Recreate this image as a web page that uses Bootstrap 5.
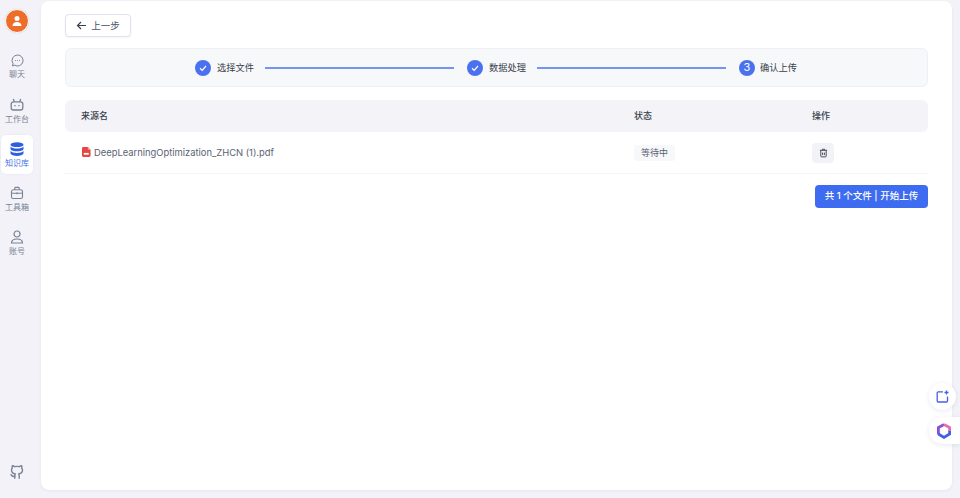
<!DOCTYPE html>
<html>
  <head>
    <meta charset="UTF-8" />
    <title>知识库</title>
    <link href="https://cdn.jsdelivr.net/npm/bootstrap@5.3.0/dist/css/bootstrap.min.css" rel="stylesheet" />
    <style>
      html, body { height: 100%; overflow: hidden; }
      body {
        background: #f2f2f8;
        color: #485264;
        font-family: Inter, "Noto Sans CJK SC", sans-serif;
        font-size: 9px;
      }
      .app-shell { height: 498px; }
      .side-bar { width: 41px; padding: 9px 8px 0 1px; }
      .avatar-ring {
        width: 24px; height: 24px; border-radius: 50%;
        background: #ed6d2b; border: 1px solid #fff;
        box-shadow: 0 0 2px rgba(0,0,0,.1);
        margin-bottom: 14px;
      }
      .side-item {
        width: 32px; height: 39px; margin-bottom: 5px; flex: none;
        font-size: 8px; line-height: 10px; color: #7a8294; border-radius: 5px;
      }
      .side-item svg { margin-bottom: 2px; }
      .side-item.on { background: #fff; color: #3f6fe8; box-shadow: 0 0 3px rgba(19,51,107,.06); }
      .git-link { margin-top: auto; margin-bottom: 19px; }
      .git-link svg { display: block; }
      .main-panel {
        width: 911px; height: 489px; margin-top: 1px; background: #fff;
        border-radius: 8px; padding: 13px 24px 0 24px;
        box-shadow: 0 1px 3px rgba(19,51,107,.06);
      }
      .back-btn {
        width: 66px; height: 23px; padding: 0; font-size: 9.5px; line-height: 1;
        color: #485264; border: 1px solid #dfe2ea; border-radius: 4px; background: #fff;
        box-shadow: 0 1px 2px rgba(19,51,107,.05);
      }
      .step-box {
        height: 39px; margin-top: 11px; background: #f7f8fa;
        border: 1px solid #eff0f4; border-radius: 6px; padding: 0 130px 0 129px;
        font-size: 9.25px; color: #383f4d;
      }
      .step-dot {
        width: 16px; height: 16px; border-radius: 50%; background: #4a72ee; color: #fff;
        font-size: 11px; flex: none; margin-right: 6px;
      }
      .step-dot.step-last { margin-right: 5px; }
      .step-line { height: 2px; background: #7395f0; flex: 1; margin: 0 13px 0 11px; }
      .step-line.step-first { flex: 0 0 189px; }
      .head-row {
        height: 32px; margin-top: 13px; background: #f4f4f8; border-radius: 6px;
        font-size: 9px; font-weight: 500; color: #383f4d;
      }
      .body-row { height: 42px; border-bottom: 1px solid #f4f4f7; font-size: 9.4px; }
      .cell-name { width: 569px; padding-left: 16px; flex: none; }
      .pdf-icon { margin-left: 1px; }
      .file-text { padding-top: 2px; margin-left: 3px; color: #5a6272; }
      .cell-state { width: 178px; flex: none; }
      .state-tag {
        background: #f7f8fa; border-radius: 3px; height: 16px; width: 41px;
        font-size: 9px; color: #5a6272;
      }
      .trash-btn { width: 22px; height: 20px; background: #f2f3f6; border-radius: 4px; }
      .upload-btn {
        width: 113px; height: 23px; padding: 0; margin-top: 11px; font-size: 9.5px; font-weight: 500;
        background: #3e6cf0; color: #fff; border: 0; border-radius: 4px;
      }
      .float-one, .float-two {
        position: absolute; background: #fff; width: 27px; height: 27px;
        box-shadow: 0 1px 5px rgba(19,51,107,.1);
      }
      .float-one { right: 4px; top: 383px; border-radius: 50%; }
      .float-two { right: 0; top: 417px; width: 31px; border-radius: 14px 0 0 14px; padding-right: 1px; }
    </style>
  </head>
  <body>
    <div class="app-shell d-flex">
      <div class="side-bar d-flex flex-column align-items-center">
        <div class="avatar-ring d-flex align-items-center justify-content-center">
          <svg width="12" height="12" viewBox="0 0 12 12" fill="#fff"><circle cx="6" cy="3.600" r="2.500"/><path d="M1.500 11c0-2.600 2-3.900 4.500-3.900s4.500 1.300 4.500 3.900z"/></svg>
        </div>
        <div class="side-item d-flex flex-column align-items-center justify-content-center">
          <svg width="13" height="13" viewBox="0 0 13 13" fill="none" stroke="#7a8294" stroke-width="1"><path d="M6.500 1a5.500 5.500 0 1 1-2.800 10.200L1.500 12l.5-2.400A5.500 5.500 0 0 1 6.500 1z"/><path d="M4 6.500h.8M6.100 6.500h.8M8.200 6.500h.8" stroke-width="1.100"/></svg>
          <span>聊天</span>
        </div>
        <div class="side-item d-flex flex-column align-items-center justify-content-center">
          <svg width="14" height="14" viewBox="0 0 14 14" fill="none" stroke="#7a8294" stroke-width="1.300"><rect x="1.200" y="3.800" width="11.600" height="8.200" rx="2.200"/><path d="M4.300 3.800 3.300 1M9.700 3.800l1-2.800M5 7v1.300M9 7v1.300"/></svg>
          <span>工作台</span>
        </div>
        <div class="side-item on d-flex flex-column align-items-center justify-content-center">
          <svg width="14" height="14" viewBox="0 0 14 14" fill="#2f5fe0"><ellipse cx="7" cy="2.700" rx="6.500" ry="2.400"/><path d="M.5 4.500C1.500 6 4 6.500 7 6.500s5.500-.5 6.500-2v2.700C13 8.600 10 9.200 7 9.200S1 8.600.5 7.200z"/><path d="M.5 9C1.500 10.300 4 10.900 7 10.900s5.500-.6 6.500-1.900v2.500C13 13 10 14 7 14s-6-1-6.500-2.500z"/></svg>
          <span>知识库</span>
        </div>
        <div class="side-item d-flex flex-column align-items-center justify-content-center">
          <svg width="14" height="14" viewBox="0 0 14 14" fill="none" stroke="#7a8294" stroke-width="1.100"><rect x="1.500" y="3.800" width="11" height="8.700" rx="1.800"/><path d="M4.800 3.800V2.200c0-.5.300-.8.800-.8h2.800c.5 0 .8.300.8.800v1.600M1.500 7.300h11M7 6.300v2"/></svg>
          <span>工具箱</span>
        </div>
        <div class="side-item d-flex flex-column align-items-center justify-content-center">
          <svg width="14" height="14" viewBox="0 0 14 14" fill="none" stroke="#7a8294" stroke-width="1.200"><circle cx="7" cy="4" r="3"/><path d="M1.500 13c0-2.800 2.200-4 5.500-4s5.500 1.200 5.500 4z"/></svg>
          <span>账号</span>
        </div>
        <div class="git-link">
          <svg width="16" height="16" viewBox="0 0 16 16" fill="none" stroke="#7a8294" stroke-width="1.400" stroke-linejoin="round" stroke-linecap="round"><path d="M5.800 15.300v-2.800c0-.7.200-1.200.6-1.500-2.200-.3-3.900-1.100-3.900-3.900 0-.8.300-1.500.8-2-.1-.4-.3-1.200.1-2.300 0 0 .8-.2 2.300.9a7.500 7.500 0 0 1 4.600 0c1.500-1.100 2.300-.9 2.300-.9.400 1.100.2 1.900.1 2.300.5.500.8 1.200.8 2 0 2.800-1.700 3.600-3.900 3.900.4.300.6.800.6 1.500v2.800"/><path d="M5.800 13.300c-2 .5-3-.3-3.800-1.700"/></svg>
        </div>
      </div>

      <div class="main-panel">
        <button type="button" class="btn back-btn d-flex align-items-center justify-content-center gap-1">
          <svg width="11" height="11" viewBox="0 0 11 11" fill="none" stroke="#383f4d" stroke-width="1.200"><path d="M10 5.500H1.500M5 2 1.500 5.500 5 9"/></svg>
          <span>上一步</span>
        </button>

        <div class="step-box d-flex align-items-center">
          <div class="step-dot d-flex align-items-center justify-content-center">
            <svg width="10" height="10" viewBox="0 0 10 10" fill="none" stroke="#fff" stroke-width="1.200"><path d="M2 5.300 4.200 7.300 8 3"/></svg>
          </div>
          <span>选择文件</span>
          <div class="step-line step-first"></div>
          <div class="step-dot d-flex align-items-center justify-content-center">
            <svg width="10" height="10" viewBox="0 0 10 10" fill="none" stroke="#fff" stroke-width="1.200"><path d="M2 5.300 4.200 7.300 8 3"/></svg>
          </div>
          <span>数据处理</span>
          <div class="step-line"></div>
          <div class="step-dot step-last d-flex align-items-center justify-content-center">3</div>
          <span>确认上传</span>
        </div>

        <div class="head-row d-flex align-items-center">
          <div class="cell-name">来源名</div>
          <div class="cell-state">状态</div>
          <div>操作</div>
        </div>
        <div class="body-row d-flex align-items-center">
          <div class="cell-name d-flex align-items-center">
            <svg width="9" height="10" viewBox="0 0 10 11" class="pdf-icon"><path d="M1.500 0H6.500L9.500 3V9.500A1.500 1.500 0 0 1 8 11H1.500A1.500 1.500 0 0 1 0 9.500V1.500A1.500 1.500 0 0 1 1.500 0z" fill="#e5483e"/><path d="M6.500 0 9.500 3H6.500z" fill="#f4a59f"/><rect x="2" y="6.500" width="5.500" height="2" fill="#fff"/></svg>
            <span class="file-text">DeepLearningOptimization_ZHCN (1).pdf</span>
          </div>
          <div class="cell-state"><div class="state-tag d-flex align-items-center justify-content-center">等待中</div></div>
          <div class="trash-btn d-flex align-items-center justify-content-center">
            <svg width="9" height="10" viewBox="0 0 10 10" fill="none" stroke="#383f4d" stroke-width="1"><path d="M1 2h8M3.800 2V.8h2.400V2M2 2v6.500c0 .5.300.8.800.8h4.400c.5 0 .8-.3.800-.8V2M4 4.500v2.800M6 4.500v2.800"/></svg>
          </div>
        </div>
        <div class="d-flex justify-content-end">
          <button type="button" class="btn upload-btn">共 1 个文件 | 开始上传</button>
        </div>
      </div>
    </div>

    <div class="float-one d-flex align-items-center justify-content-center">
      <svg width="13" height="13" viewBox="0 0 13 13" fill="none" stroke="#4a5ce8" stroke-width="1.300"><path d="M7 1.800H2.200A1 1 0 0 0 1.200 2.800V11a1 1 0 0 0 1 1h8.300a1 1 0 0 0 1-1V6.500"/><path d="M10.500.5v4M8.500 2.500h4"/></svg>
    </div>
    <div class="float-two d-flex align-items-center justify-content-center">
      <svg width="14" height="16" viewBox="0 0 14 16" fill="none" stroke-width="2.800">
        <path d="M1.400 11.500V4.500L7 1.500" stroke="#8a4fd8"/>
        <path d="M7 1.500 12.600 4.500V8" stroke="#e36fb0"/>
        <path d="M1.400 11 7 14.400 12.600 11V8" stroke="#3f5fe8"/>
      </svg>
    </div>

    <script src="https://cdn.jsdelivr.net/npm/bootstrap@5.3.0/dist/js/bootstrap.bundle.min.js"></script>
  </body>
</html>
